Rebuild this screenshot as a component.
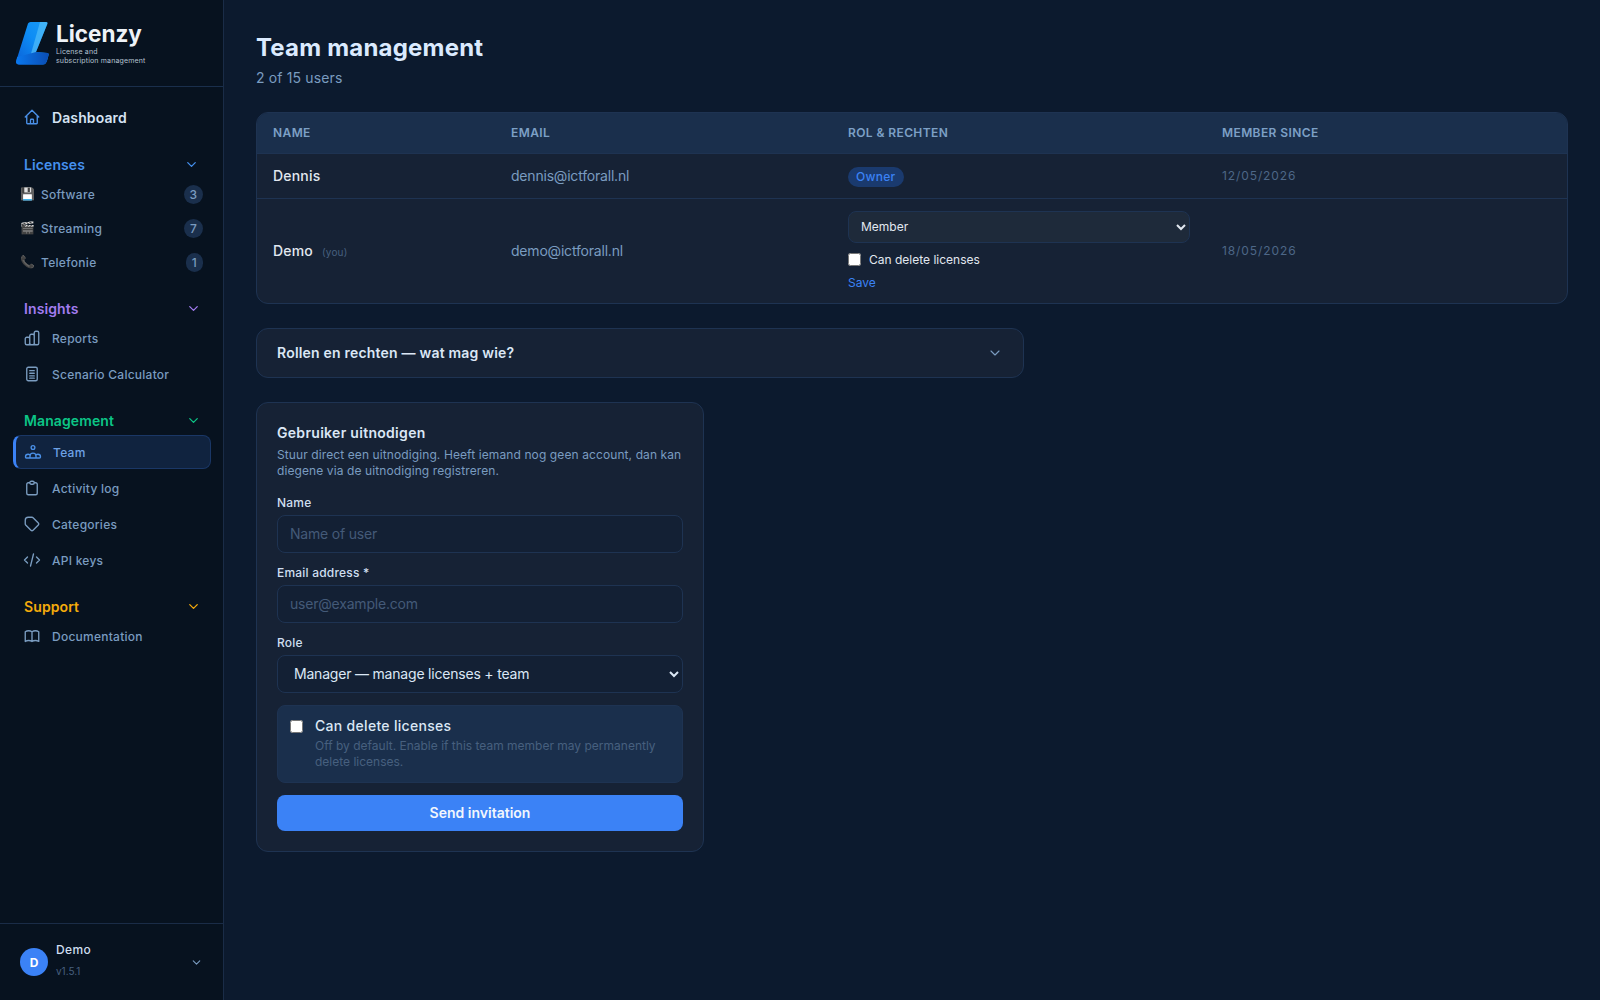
<div class="shell">
  <aside class="sidebar">
    <div class="brand">
      <svg class="logo" viewBox="0 0 33 45" aria-hidden="true">
        <defs>
          <linearGradient id="lg1" x1="0" y1="1" x2="1" y2="0"><stop offset="0" stop-color="#0a5fd6"/><stop offset=".55" stop-color="#0d8cf5"/><stop offset="1" stop-color="#1a9cf5"/></linearGradient>
          <linearGradient id="lg2" x1="0" y1="0" x2="1" y2="0"><stop offset="0" stop-color="#0a78ee"/><stop offset="1" stop-color="#0a4db4"/></linearGradient>
        </defs>
        <path d="M12 2.500 Q12.800 1 14.500 1 L30 1 Q32 1 31.300 3 L20 31 L31.500 32 Q33 32.200 32.600 34 L30.800 40.500 Q30 43 27 43.500 L3 43.500 Q-.5 43.500 .2 40 Z" fill="url(#lg1)"/>
        <path d="M24 1 L30 1 Q32 1 31.300 3 L20 31 L13.500 38 Z" fill="#5cc4fa" opacity=".6"/>
        <path d="M1.200 36 L20 31 L31.500 32 Q33 32.200 32.600 34 L30.800 40.500 Q30 43 27 43.500 L3 43.500 Q-.5 43.500 .2 40 Z" fill="url(#lg2)"/>
      </svg>
      <div class="brandtext">
        <div class="wordmark">Licenzy</div>
        <div class="tagline">License and<br />subscription management</div>
      </div>
    </div>

    <nav class="nav">
      <a class="link dash">
        <svg class="ic blue" viewBox="0 0 24 24"><path d="M3 12l2-2m0 0l7-7 7 7M5 10v10a1 1 0 001 1h3m10-11l2 2m-2-2v10a1 1 0 01-1 1h-3m-6 0a1 1 0 001-1v-4a1 1 0 011-1h2a1 1 0 011 1v4a1 1 0 001 1m-6 0h6"/></svg>
        <span>Dashboard</span>
      </a>

      <section class="group g1">
        <header class="ghead c-blue"><span>Licenses</span><svg viewBox="0 0 24 24"><path d="M6 9l6 6 6-6"/></svg></header>
        <a class="cat"><span class="emo">💾</span><span class="catname">Software</span><b class="badge">3</b></a>
        <a class="cat"><span class="emo">🎬</span><span class="catname">Streaming</span><b class="badge">7</b></a>
        <a class="cat"><span class="emo">📞</span><span class="catname">Telefonie</span><b class="badge small">1</b></a>
      </section>

      <section class="group g2">
        <header class="ghead c-purple"><span>Insights</span><svg viewBox="0 0 24 24"><path d="M6 9l6 6 6-6"/></svg></header>
        <a class="link">
          <svg class="ic" viewBox="0 0 24 24"><path d="M9 19v-6a2 2 0 00-2-2H5a2 2 0 00-2 2v6a2 2 0 002 2h2a2 2 0 002-2zm0 0V9a2 2 0 012-2h2a2 2 0 012 2v10m-6 0a2 2 0 002 2h2a2 2 0 002-2m0 0V5a2 2 0 012-2h2a2 2 0 012 2v14a2 2 0 01-2 2h-2a2 2 0 01-2-2z"/></svg>
          <span>Reports</span>
        </a>
        <a class="link">
          <svg class="ic" viewBox="0 0 24 24"><path d="M7 3h10a2 2 0 012 2v14a2 2 0 01-2 2H7a2 2 0 01-2-2V5a2 2 0 012-2zM9 7.500h6M9 11h6M9 14.500h6M9 17.500h6"/></svg>
          <span>Scenario Calculator</span>
        </a>
      </section>

      <section class="group g3">
        <header class="ghead c-green"><span>Management</span><svg viewBox="0 0 24 24"><path d="M6 9l6 6 6-6"/></svg></header>
        <a class="link active">
          <svg class="ic" viewBox="0 0 24 24"><path d="M12 3.500a2.500 2.500 0 110 5 2.500 2.500 0 010-5zM8 20h8v-2.500a4 4 0 00-8 0V20zM8 20H3.500A1.500 1.500 0 012 18.500c0-1.900 1.600-3.500 3.500-3.500 1 0 2 .4 2.700 1M16 20h4.500a1.500 1.500 0 001.500-1.500c0-1.900-1.600-3.500-3.500-3.500-1 0-2 .4-2.700 1"/></svg>
          <span>Team</span>
        </a>
        <a class="link">
          <svg class="ic" viewBox="0 0 24 24"><path d="M9 5H7a2 2 0 00-2 2v12a2 2 0 002 2h10a2 2 0 002-2V7a2 2 0 00-2-2h-2M9 5a2 2 0 002 2h2a2 2 0 002-2M9 5a2 2 0 012-2h2a2 2 0 012 2"/></svg>
          <span>Activity log</span>
        </a>
        <a class="link">
          <svg class="ic" viewBox="0 0 24 24"><path d="M7 3h5c.512 0 1.024.195 1.414.586l7 7a2 2 0 010 2.828l-7 7a2 2 0 01-2.828 0l-7-7A1.994 1.994 0 013 12V7a4 4 0 014-4z"/></svg>
          <span>Categories</span>
        </a>
        <a class="link">
          <svg class="ic" viewBox="0 0 24 24"><path d="M10 20l4-16M18 8l4 4-4 4M6 16l-4-4 4-4"/></svg>
          <span>API keys</span>
        </a>
      </section>

      <section class="group g4">
        <header class="ghead c-amber"><span>Support</span><svg viewBox="0 0 24 24"><path d="M6 9l6 6 6-6"/></svg></header>
        <a class="link doc">
          <svg class="ic" viewBox="0 0 24 24"><path d="M12 6.253v13C10.832 18.477 9.246 18 7.500 18S4.168 18.477 3 19.253v-13C4.168 5.477 5.754 5 7.500 5s3.332.477 4.500 1.253zm0 0C13.168 5.477 14.754 5 16.500 5c1.747 0 3.332.477 4.500 1.253v13C19.832 18.477 18.247 18 16.500 18c-1.746 0-3.332.477-4.500 1.253"/></svg>
          <span>Documentation</span>
        </a>
      </section>
    </nav>

    <footer class="user">
      <div class="avatar">D</div>
      <div class="uinfo">
        <div class="uname">Demo</div>
        <div class="uver">v1.5.1</div>
      </div>
      <svg class="uchev" viewBox="0 0 24 24"><path d="M6 9l6 6 6-6"/></svg>
    </footer>
  </aside>

  <main class="main">
    <h1>Team management</h1>
    <p class="sub">2 of 15 users</p>

    <div class="tablecard">
      <table>
        <colgroup><col class="c1" /><col class="c2" /><col class="c3" /><col /></colgroup>
        <thead>
          <tr><th>Name</th><th>Email</th><th>Rol &amp; rechten</th><th>Member since</th></tr>
        </thead>
        <tbody>
          <tr>
            <td class="name">Dennis</td>
            <td class="mail">dennis@ictforall.nl</td>
            <td><span class="pill">Owner</span></td>
            <td class="date">12/05/2026</td>
          </tr>
          <tr>
            <td class="name">Demo <small>(you)</small></td>
            <td class="mail">demo@ictforall.nl</td>
            <td>
              <select class="tsel"><option>Member</option></select>
              <label class="tcheck"><input type="checkbox" /><span>Can delete licenses</span></label>
              <button class="save">Save</button>
            </td>
            <td class="date">18/05/2026</td>
          </tr>
        </tbody>
      </table>
    </div>

    <button class="accordion">
      <span>Rollen en rechten — wat mag wie?</span>
      <svg viewBox="0 0 24 24"><path d="M6 9l6 6 6-6"/></svg>
    </button>

    <form class="invite">
      <h2>Gebruiker uitnodigen</h2>
      <p class="intro">Stuur direct een uitnodiging. Heeft iemand nog geen account, dan kan diegene via de uitnodiging registreren.</p>
      <label class="field"><span>Name</span><input type="text" placeholder="Name of user" /></label>
      <label class="field"><span>Email address *</span><input type="email" placeholder="user@example.com" /></label>
      <label class="field"><span>Role</span><select><option>Manager — manage licenses + team</option></select></label>
      <label class="perm">
        <input type="checkbox" />
        <span class="permtext">
          <strong>Can delete licenses</strong>
          <em>Off by default. Enable if this team member may permanently delete licenses.</em>
        </span>
      </label>
      <button type="button" class="send">Send invitation</button>
    </form>
  </main>
</div>

<style>
  :global(body) {
    margin: 0;
    background: #0c1a2e;
    font-family: Inter, "Noto Sans", sans-serif;
  }
  * { box-sizing: border-box; }
  .shell { display: flex; height: 1000px; overflow: hidden; }

  .sidebar {
    width: 224px; flex: none; display: flex; flex-direction: column;
    background: #07121f; border-right: 1px solid #1a2c47;
  }
  .brand { height: 87px; flex: none; display: flex; align-items: center; gap: 7px; padding: 0 0 0 16px; border-bottom: 1px solid #1a2f4c; }
  .logo { width: 33px; height: 45px; flex: none; }
  .wordmark { font-size: 22.5px; line-height: 25px; padding-top: 1px; margin-top: -1px; font-weight: 700; color: #eef2f7; }
  .tagline { font-size: 7px; line-height: 9px; color: #b6c2d2; margin-top: 1px; letter-spacing: .15px; white-space: nowrap; }

  .nav { flex: 1; padding: 12px 12px 0; }
  .link {
    display: flex; align-items: center; height: 36px; gap: 11px; padding: 0 0 0 10px;
    color: #7a9cc0; font-size: 12px; font-weight: 500; letter-spacing: .25px; border-radius: 8px; border: 1px solid transparent;
  }
  .link.dash { color: #d5e3f3; font-size: 14px; font-weight: 600; letter-spacing: .1px; }
  .ic { width: 18px; height: 18px; flex: none; fill: none; stroke: #7a9cc0; stroke-width: 1.8; stroke-linecap: round; stroke-linejoin: round; }
  .ic.blue { stroke: #4a90e8; }

  .g1 { margin-top: 19px; }
  .g2 { margin-top: 19px; }
  .g3 { margin-top: 18px; }
  .g4 { margin-top: 18px; }
  .ghead { display: flex; align-items: center; justify-content: space-between; height: 20px; padding: 0 10px 0 12px; font-size: 14px; font-weight: 600; letter-spacing: .1px; }
  .g1 .ghead { padding-right: 12px; margin-bottom: 3px; }
  .g2 .ghead { margin-bottom: 2px; }
  .g4 .ghead { margin-bottom: 2px; }
  .ghead svg { width: 15px; height: 15px; margin-top: 1px; fill: none; stroke: currentColor; stroke-width: 2; stroke-linecap: round; stroke-linejoin: round; }
  .c-blue { color: #4590ee; }
  .c-purple { color: #a27cf0; }
  .c-green { color: #0cc586; }
  .c-amber { color: #f5ab0b; }

  .cat { display: flex; align-items: center; height: 34px; padding: 0 8px; color: #7a9cc0; font-size: 12px; font-weight: 500; letter-spacing: .3px; }
  .emo { width: 14px; font-size: 12px; margin-right: 7px; line-height: 1; }
  .catname { flex: 1; }
  .badge { min-width: 19px; height: 19px; border-radius: 10px; background: #1a2f4c; color: #7a9cc0; font-size: 12px; font-weight: 500; display: flex; align-items: center; justify-content: center; }
  .badge.small { min-width: 17px; }

  .link.active { background: #10233f; color: #6ea2e6; border: 1px solid #1a3766; border-left: 3px solid #3b82f6; height: 34px; margin-left: 1px; padding-left: 8px; }
  .link.active .ic { stroke: #4a90e8; }
  .g3 .ghead + .link { margin-top: 5px; }
  .g3 .link.active + .link { margin-top: 1px; }

  .user { height: 77px; flex: none; display: flex; align-items: center; padding: 0 20px; gap: 8px; border-top: 1px solid #1a2c47; }
  .avatar { width: 28px; height: 28px; border-radius: 50%; background: #3b82f6; color: #fff; font-size: 12px; font-weight: 700; display: flex; align-items: center; justify-content: center; }
  .uinfo { flex: 1; padding-bottom: 4px; }
  .uname { font-size: 12px; font-weight: 500; color: #cfdff0; line-height: 16px; letter-spacing: .35px; }
  .uver { font-size: 10px; color: #47607f; line-height: 14px; margin-top: 6px; }
  .uchev { width: 13px; height: 13px; fill: none; stroke: #7a9cc0; stroke-width: 2; stroke-linecap: round; stroke-linejoin: round; }

  .main { flex: 1; min-width: 0; padding: 32px 32px 0; }
  h1 { margin: 0; font-size: 24px; line-height: 32px; font-weight: 700; color: #dbeafe; letter-spacing: .2px; }
  .sub { margin: 4px 0 24px; font-size: 14px; line-height: 20px; color: #7a9cc0; letter-spacing: .15px; }

  .tablecard { background: #162235; border: 1px solid #1e3352; border-radius: 12px; overflow: hidden; }
  table { width: 100%; border-collapse: collapse; table-layout: fixed; }
  .c1 { width: 238px; } .c2 { width: 337px; } .c3 { width: 374px; }
  thead tr { background: #1a2f4c; }
  th { height: 40px; padding: 0 16px; text-align: left; font-size: 12px; font-weight: 600; color: #7da0c6; text-transform: uppercase; letter-spacing: .4px; }
  td { padding: 12px 16px; font-size: 14px; vertical-align: middle; border-top: 1px solid #1e3352; }
  .name { color: #e2e8f0; font-weight: 500; letter-spacing: .2px; }
  .name small { color: #47607f; font-size: 10px; font-weight: 400; margin-left: 5px; }
  .mail { color: #7a9cc0; letter-spacing: -.2px; }
  .date { color: #4d6787; font-size: 12px; letter-spacing: .9px; }
  .pill { display: inline-block; margin: 1px 0 -1px; padding: 2px 8px; border-radius: 10px; background: #1a3a6e; color: #3b82f6; font-size: 12px; line-height: 16px; font-weight: 500; letter-spacing: .3px; vertical-align: middle; }
  .tsel { display: block; width: 342px; height: 32px; padding: 0 8px; background: #1e2a3a; color: #e2e8f0; border: 1px solid #1e3352; border-radius: 8px; font: inherit; font-size: 12px; }
  .tcheck { display: flex; align-items: center; gap: 8px; margin-top: 9px; color: #e2e8f0; font-size: 12px; height: 16px; }
  .tcheck input { margin: 0; width: 13px; height: 13px; }
  .save { display: block; background: none; border: 0; padding: 0; margin-top: 7px; color: #3b82f6; font: inherit; font-size: 12px; line-height: 16px; }

  .accordion {
    display: flex; align-items: center; justify-content: space-between;
    width: 768px; height: 50px; margin-top: 24px; padding: 0 20px;
    background: #162235; border: 1px solid #1e3352; border-radius: 12px;
    color: #dbe7f5; font: inherit; font-size: 14px; font-weight: 600; letter-spacing: .2px;
  }
  .accordion svg { width: 16px; height: 16px; fill: none; stroke: #7a9cc0; stroke-width: 1.7; stroke-linecap: round; stroke-linejoin: round; }

  .invite { width: 448px; margin-top: 24px; padding: 20px; background: #162235; border: 1px solid #1e3352; border-radius: 12px; }
  h2 { margin: 0; font-size: 14px; line-height: 20px; font-weight: 600; color: #dbe7f5; letter-spacing: .3px; }
  .intro { margin: 4px 0 16px; font-size: 12px; line-height: 16px; color: #7a9cc0; letter-spacing: .1px; }
  .field { display: block; margin-top: 12px; }
  .intro + .field { margin-top: 0; }
  .field span { display: block; font-size: 12px; line-height: 16px; font-weight: 500; color: #cfdff0; margin-bottom: 4px; letter-spacing: .2px; }
  .field input, .field select {
    display: block; width: 100%; height: 38px; padding: 0 12px; background: #132034; border: 1px solid #1e3352; border-radius: 8px;
    color: #dbe7f5; font: inherit; font-size: 14px; letter-spacing: -.2px; outline: none;
  }
  .field input { letter-spacing: -.2px; }
  .field input::placeholder { color: #445a78; }
  .perm { display: flex; align-items: flex-start; gap: 12px; margin-top: 12px; height: 78px; padding: 10px 12px 12px; background: #1a2f4c; border: 1px solid #1e3352; border-radius: 8px; }
  .perm input { width: 13px; height: 13px; margin: 4px 0 0; flex: none; }
  .permtext { display: block; }
  .perm strong { display: block; font-size: 14px; line-height: 20px; font-weight: 500; color: #dbe7f5; letter-spacing: .3px; }
  .perm em { display: block; font-style: normal; font-size: 12px; line-height: 16px; color: #47607f; margin-top: 2px; }
  .send { display: block; width: 100%; height: 36px; margin-top: 12px; background: #3b82f6; color: #f1f6fd; border: 0; border-radius: 8px; font: inherit; font-size: 14px; font-weight: 600; }
</style>
